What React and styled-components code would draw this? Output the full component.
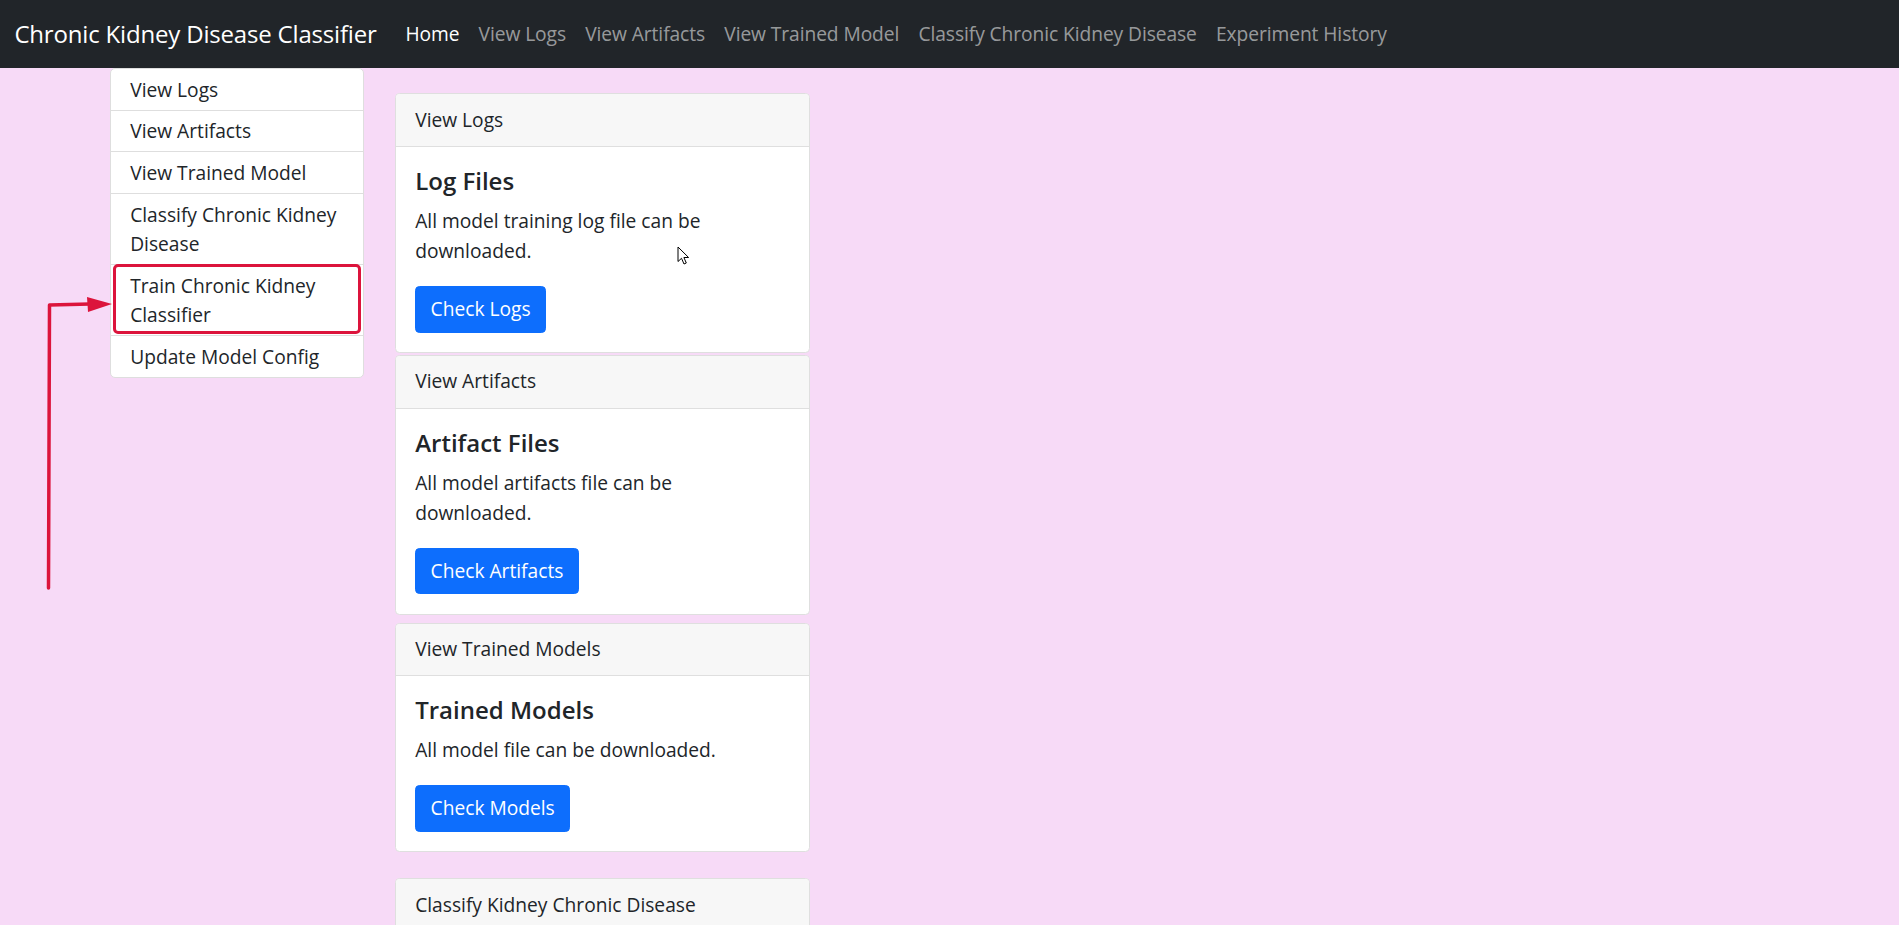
import React from "react";
import styled, { createGlobalStyle } from "styled-components";

const FONT = '"Open Sans", "Noto Sans", "Liberation Sans", sans-serif';

const Global = createGlobalStyle`
  html, body { margin: 0; padding: 0; }
  body {
    background: #f7daf7;
    font-family: ${FONT};
    font-size: 19.2px;
    line-height: 1.5;
    color: #212529;
    overflow: hidden;
  }
  * { box-sizing: border-box; }
`;

const Page = styled.div`
  position: relative;
  width: 1899px;
  height: 925px;
  overflow: hidden;
`;

const Navbar = styled.nav`
  height: 68px;
  background: #212529;
  display: flex;
  align-items: center;
  padding: 0 14.4px;
`;

const Brand = styled.a`
  font-size: 24px;
  line-height: 36px;
  color: #fff;
  margin-right: 19.2px;
  text-decoration: none;
  letter-spacing: -0.18px;
`;

const NavList = styled.div`
  display: flex;
  align-items: center;
`;

const NavLink = styled.a`
  padding: 0 9.6px;
  font-size: 19.2px;
  line-height: 28.8px;
  letter-spacing: -0.07px;
  color: ${(p) => (p.$active ? "#ffffff" : "rgba(255,255,255,0.55)")};
  text-decoration: none;
`;

const Content = styled.div`
  display: flex;
  align-items: flex-start;
  padding-left: 110px;
  gap: 31px;
`;

const SideList = styled.div`
  width: 254px;
  background: #fff;
  border: 1px solid #dedede;
  border-radius: 5px;
  display: flex;
  flex-direction: column;
`;

const SideItem = styled.a`
  position: relative;
  display: block;
  padding: 5.6px 19.2px;
  line-height: 29.5px;
  color: #212529;
  text-decoration: none;
  border-top: ${(p) => (p.$first ? "none" : "1px solid #dedede")};

  ${(p) =>
    p.$marked &&
    `
    &::after {
      content: "";
      position: absolute;
      top: -1px;
      left: 2px;
      right: 2px;
      bottom: 1px;
      border: 3.5px solid #dc143c;
      border-radius: 5px;
      pointer-events: none;
    }
  `}
`;

const Main = styled.div`
  width: 415px;
  padding-top: 25px;
  display: flex;
  flex-direction: column;
`;

const Card = styled.div`
  background: #fff;
  border: 1px solid #dfdfdf;
  border-radius: 4.5px;
  margin-top: ${(p) => p.$gap || 0}px;
  overflow: hidden;
`;

const CardHeader = styled.div`
  background: #f7f7f7;
  border-bottom: 1px solid #dfdfdf;
  padding: 11.5px 19.2px;
  line-height: 28.8px;
  color: #212529;
`;

const CardBody = styled.div`
  padding: 19.2px;
`;

const CardTitle = styled.h5`
  margin: 0 0 10px;
  font-size: 24px;
  font-weight: 600;
  line-height: 30px;
  color: #212529;
`;

const CardText = styled.p`
  margin: 0 0 20px;
  line-height: 30px;
`;

const Button = styled.a`
  display: inline-block;
  background: #0d6efd;
  color: #fff;
  border: 1.2px solid #0d6efd;
  border-radius: 4.5px;
  padding: 7.9px 14.4px;
  font-size: 19.2px;
  line-height: 28.8px;
  text-decoration: none;
`;

const Annotation = styled.svg`
  position: absolute;
  left: 0;
  top: 0;
  pointer-events: none;
`;

const Cursor = styled.svg`
  position: absolute;
  left: 677px;
  top: 246px;
`;

const cards = [
  {
    header: "View Logs",
    title: "Log Files",
    text: "All model training log file can be downloaded.",
    button: "Check Logs",
    gap: 0,
  },
  {
    header: "View Artifacts",
    title: "Artifact Files",
    text: "All model artifacts file can be downloaded.",
    button: "Check Artifacts",
    gap: 2,
  },
  {
    header: "View Trained Models",
    title: "Trained Models",
    text: "All model file can be downloaded.",
    button: "Check Models",
    gap: 8,
  },
  {
    header: "Classify Kidney Chronic Disease",
    title: "Classify",
    text: "Classify chronic kidney disease.",
    button: "Classify",
    gap: 26,
  },
];

const sideItems = [
  "View Logs",
  "View Artifacts",
  "View Trained Model",
  "Classify Chronic Kidney Disease",
  "Train Chronic Kidney Classifier",
  "Update Model Config",
];

export default function App() {
  return (
    <Page>
      <Global />
      <Navbar>
        <Brand href="#">Chronic Kidney Disease Classifier</Brand>
        <NavList>
          <NavLink $active href="#">Home</NavLink>
          <NavLink href="#">View Logs</NavLink>
          <NavLink href="#">View Artifacts</NavLink>
          <NavLink href="#">View Trained Model</NavLink>
          <NavLink href="#">Classify Chronic Kidney Disease</NavLink>
          <NavLink href="#">Experiment History</NavLink>
        </NavList>
      </Navbar>
      <Content>
        <SideList>
          {sideItems.map((s, i) => (
            <SideItem key={s} href="#" $first={i === 0} $marked={i === 4}>
              {s}
            </SideItem>
          ))}
        </SideList>
        <Main>
          {cards.map((c) => (
            <Card key={c.header} $gap={c.gap}>
              <CardHeader>{c.header}</CardHeader>
              <CardBody>
                <CardTitle>{c.title}</CardTitle>
                <CardText>{c.text}</CardText>
                <Button href="#">{c.button}</Button>
              </CardBody>
            </Card>
          ))}
        </Main>
      </Content>
      <Annotation width="130" height="600">
        <path
          d="M48.5 588 L49.5 305 L90 304"
          fill="none"
          stroke="#dc143c"
          strokeWidth="3.5"
          strokeLinecap="round"
          strokeLinejoin="round"
        />
        <path d="M87 297 L112 304 L88 312 Z" fill="#dc143c" />
      </Annotation>
      <Cursor width="14" height="20" viewBox="0 0 14 20">
        <path
          d="M1 1 L1 15.5 L4.5 12.3 L7 18 L9.3 17 L6.9 11.5 L11.6 11.5 Z"
          fill="#fff"
          stroke="#000"
          strokeWidth="1"
          strokeLinejoin="round"
        />
      </Cursor>
    </Page>
  );
}
